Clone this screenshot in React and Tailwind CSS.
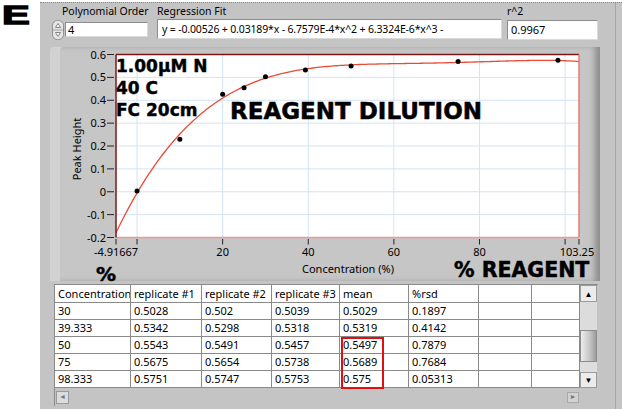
import React from 'react'

// plot scale, in page pixels
const X = (v) => 116 + (v + 4.91667) * 4.2805
const Y = (v) => 54.5 + (0.6 - v) * 228.75
const fit = (x) =>
  -0.00526 + 0.03189 * x - 6.7579e-4 * x * x + 6.3324e-6 * x ** 3 - 2.1855e-8 * x ** 4

const points = [
  [0, 0.003], [10, 0.23], [20, 0.426], [25, 0.455], [30, 0.5029],
  [39.333, 0.5319], [50, 0.5497], [75, 0.5689], [98.333, 0.575],
]

const yTicks = ['0.6', '0.5', '0.4', '0.3', '0.2', '0.1', '0', '-0.1', '-0.2']
const xLabels = [
  [-4.91667, '-4.91667'], [20, '20'], [40, '40'], [60, '60'], [80, '80'], [103.25, '103.25'],
]
const xTicks = [-4.91667, 0, 20, 40, 60, 80, 100, 103.25]

const rows = [
  ['30', '0.5028', '0.502', '0.5039', '0.5029', '0.1897'],
  ['39.333', '0.5342', '0.5298', '0.5318', '0.5319', '0.4142'],
  ['50', '0.5543', '0.5491', '0.5457', '0.5497', '0.7879'],
  ['75', '0.5675', '0.5654', '0.5738', '0.5689', '0.7684'],
  ['98.333', '0.5751', '0.5747', '0.5753', '0.575', '0.05313'],
]
const headers = ['Concentration', 'replicate #1', 'replicate #2', 'replicate #3', 'mean', '%rsd', '', '']

function Chart() {
  const curve = Array.from({ length: 201 }, (_, i) => {
    const x = -4.91667 + (i * 108.16667) / 200
    return `${i ? 'L' : 'M'}${X(x).toFixed(2)} ${Y(fit(x)).toFixed(2)}`
  }).join(' ')

  return (
    <svg
      className="absolute left-0 top-0"
      width="550"
      height="234"
      viewBox="50 47 550 234"
      fontFamily="'Noto Sans', sans-serif"
      fontSize="11"
    >
      <rect x="116" y="54.5" width="463" height="183" fill="#fff" />
      {[0, 20, 40, 60, 80, 100].map((v) => (
        <line key={v} x1={X(v)} x2={X(v)} y1="54.5" y2="237.5" stroke="#d3e3f5" />
      ))}
      {[0.5, 0.4, 0.3, 0.2, 0.1, 0, -0.1].map((v) => (
        <line key={v} x1="116" x2="579" y1={Y(v)} y2={Y(v)} stroke="#d3e3f5" />
      ))}
      <clipPath id="plot">
        <rect x="116" y="54.5" width="463" height="183" />
      </clipPath>
      <path d={curve} fill="none" stroke="#ea4a34" strokeWidth="1.3" clipPath="url(#plot)" />
      {points.map(([x, y]) => (
        <circle key={x} cx={X(x)} cy={Y(y)} r="2.5" fill="#000" />
      ))}

      {/* frame */}
      <line x1="116" x2="579" y1="54.5" y2="54.5" stroke="#7c1616" strokeWidth="1.5" />
      <line x1="579" x2="579" y1="54.5" y2="237.5" stroke="#e77a72" strokeWidth="1.5" />
      <line x1="116" x2="579" y1="237.5" y2="237.5" stroke="#eb9a92" strokeWidth="1.5" />
      <line x1="116" x2="116" y1="54.5" y2="237.5" stroke="#7c1616" strokeWidth="1.5" />

      {yTicks.map((t, i) => {
        const y = 54.5 + i * 22.875
        return (
          <g key={t}>
            <line x1="107" x2="114" y1={y} y2={y} stroke="#222" />
            <text x="106" y={y + 4} textAnchor="end">{t}</text>
          </g>
        )
      })}
      {xTicks.map((v) => (
        <line key={v} x1={X(v)} x2={X(v)} y1="239" y2="244.5" stroke="#222" />
      ))}
      {xLabels.map(([v, t]) => (
        <text key={t} x={X(v) - (v > 100 ? 2 : 0)} y="255.5" textAnchor="middle">{t}</text>
      ))}
      <text x="348" y="272.5" textAnchor="middle">Concentration (%)</text>
      <text transform="translate(81 149) rotate(-90)" textAnchor="middle">Peak Height</text>
    </svg>
  )
}

function Spinner() {
  return (
    <svg width="12" height="20" viewBox="0 0 12 20" className="mt-[1px] shrink-0">
      <rect x="0.5" y="0.5" width="11" height="19" rx="5" fill="#e6e6e6" stroke="#8e8e8e" />
      <line x1="1" x2="11" y1="10" y2="10" stroke="#a0a0a0" />
      <path d="M3.5 7.5 L6 3.5 L8.5 7.5 Z" fill="#fff" stroke="#6a6a6a" strokeWidth="0.8" />
      <path d="M3.5 12.5 L6 16.5 L8.5 12.5 Z" fill="#fff" stroke="#6a6a6a" strokeWidth="0.8" />
    </svg>
  )
}

function Table() {
  const cols = 'grid grid-cols-[76px_71px_70px_68px_69px_70px_53px_48px]'
  const cell = 'overflow-hidden whitespace-nowrap border-b border-r border-[#8a8a8a] bg-white pl-[3px] leading-[16px]'
  return (
    <div className="relative ml-[14px] mt-[3px] w-[544px] border-l border-t border-[#8a8a8a]">
      <div className="flex">
        <div className="w-[525px]">
          <div className={cols}>
            {headers.map((h, i) => (
              <div key={i} className={`${cell} h-[18px] leading-[17px]`}>{h}</div>
            ))}
          </div>
          {rows.map((r) => (
            <div key={r[0]} className={cols}>
              {[...r, '', ''].map((c, i) => (
                <div key={i} className={`${cell} h-[17px]`}>{c}</div>
              ))}
            </div>
          ))}
        </div>

        {/* vertical scrollbar */}
        <div className="flex w-[17px] flex-col bg-[#d6d6d6]">
          <div className="flex h-[17px] items-center justify-center border border-[#9a9a9a] bg-[#ececec] text-[8px] leading-none">▲</div>
          <div className="h-[28px] bg-[#dcdcdc]" />
          <div className="h-[32px] border border-[#8c8c8c] bg-[linear-gradient(to_right,#ededed,#c4c4c4_60%,#9c9c9c)]" />
          <div className="h-[10px] bg-[#dedede]" />
          <div className="flex h-[16px] items-center justify-center border border-[#9a9a9a] bg-[#ececec] text-[8px] leading-none">▼</div>
        </div>
      </div>

      {/* horizontal scrollbar */}
      <div className="flex h-[18px] items-center pl-[1px] pr-[19px]">
        <div className="flex h-[13px] w-[13px] items-center justify-center border border-[#9a9a9a] bg-[#dcdcdc] text-[7px] text-[#777]">◄</div>
        <div className="ml-auto flex h-[11px] w-[12px] items-center justify-center border border-[#a8a8a8] bg-[#d2d2d2] text-[7px] text-[#777]">►</div>
      </div>

      <div className="absolute left-[286px] top-[52px] h-[52px] w-[43px] border-2 border-[#e01010]" />
    </div>
  )
}

export default function App() {
  return (
    <div className="flex h-[409px] w-[622px] overflow-hidden bg-white font-['Noto_Sans',sans-serif] text-[11px] text-black">
      <div className="w-[40px] shrink-0">
        <div className="ml-[2px] mt-[2px] origin-left scale-x-[1.6] font-['Liberation_Sans',sans-serif] text-[26px] font-bold leading-none [-webkit-text-stroke:1.3px_black]">
          E
        </div>
      </div>

      <div className="mt-[2px] flex flex-1 border-t border-dotted border-[#8a8a8a] bg-[#c4c4c4]">
        <div className="w-[576px] shrink-0 border-r border-[#a6a6a6]">
          {/* controls */}
          <div className="flex h-[44px]">
            <div className="ml-[12px] w-[96px]">
              <div className="h-[16px] whitespace-nowrap pl-[10px] text-[10.5px] leading-[16px]">Polynomial Order</div>
              <div className="flex">
                <Spinner />
                <div className="ml-[1px] mt-[3px] h-[15px] w-[85px] border border-[#8c8c8c] border-b-[#dadada] border-r-[#dadada] bg-white pl-[2px] leading-[13px]">4</div>
              </div>
            </div>
            <div className="ml-[9px] w-[345px]">
              <div className="h-[16px] whitespace-nowrap text-[10.5px] leading-[16px]">Regression Fit</div>
              <div className="h-[20px] overflow-hidden border border-[#8c8c8c] border-b-[#dadada] border-r-[#dadada] bg-white pl-[4px] text-[10.5px] leading-[14px] tracking-[-0.15px]">
                <div className="whitespace-nowrap pt-[2px]">y = -0.00526 + 0.03189*x - 6.7579E-4*x^2 + 6.3324E-6*x^3 -</div>
                <div className="whitespace-nowrap">2.1855E-8*x^4</div>
              </div>
            </div>
            <div className="ml-[5px] w-[91px]">
              <div className="h-[16px] text-[10.5px] leading-[16px]">r^2</div>
              <div className="mt-[1px] h-[20px] border border-[#8c8c8c] border-b-[#dadada] border-r-[#dadada] bg-white pl-[3px] leading-[17px]">0.9967</div>
            </div>
          </div>

          {/* chart */}
          <div className="relative ml-[10px] h-[234px] w-[550px] rounded-tl-[4px] bg-[#c6c6c6] shadow-[inset_10px_0_0_#d2d2d2,inset_-7px_0_6px_-2px_#8c8c8c]">
            <Chart />
            <div className="absolute left-[66px] top-[8px] font-['DejaVu_Sans',sans-serif] text-[17px] font-bold leading-[22px] [-webkit-text-stroke:0.4px_black]">
              <div>1.00µM N</div>
              <div>40 C</div>
              <div>FC 20cm</div>
            </div>
            <div className="absolute left-[180px] top-[53px] font-['DejaVu_Sans',sans-serif] text-[23px] font-bold leading-none [-webkit-text-stroke:0.5px_black]">
              REAGENT DILUTION
            </div>
            <div className="absolute left-[46px] top-[217px] font-['DejaVu_Sans',sans-serif] text-[20px] font-bold leading-none [-webkit-text-stroke:0.5px_black]">
              %
            </div>
            <div className="absolute left-[404px] top-[213px] font-['DejaVu_Sans',sans-serif] text-[20.5px] font-bold leading-none [-webkit-text-stroke:0.5px_black]">
              % REAGENT
            </div>
          </div>

          <Table />
        </div>
      </div>
    </div>
  )
}
